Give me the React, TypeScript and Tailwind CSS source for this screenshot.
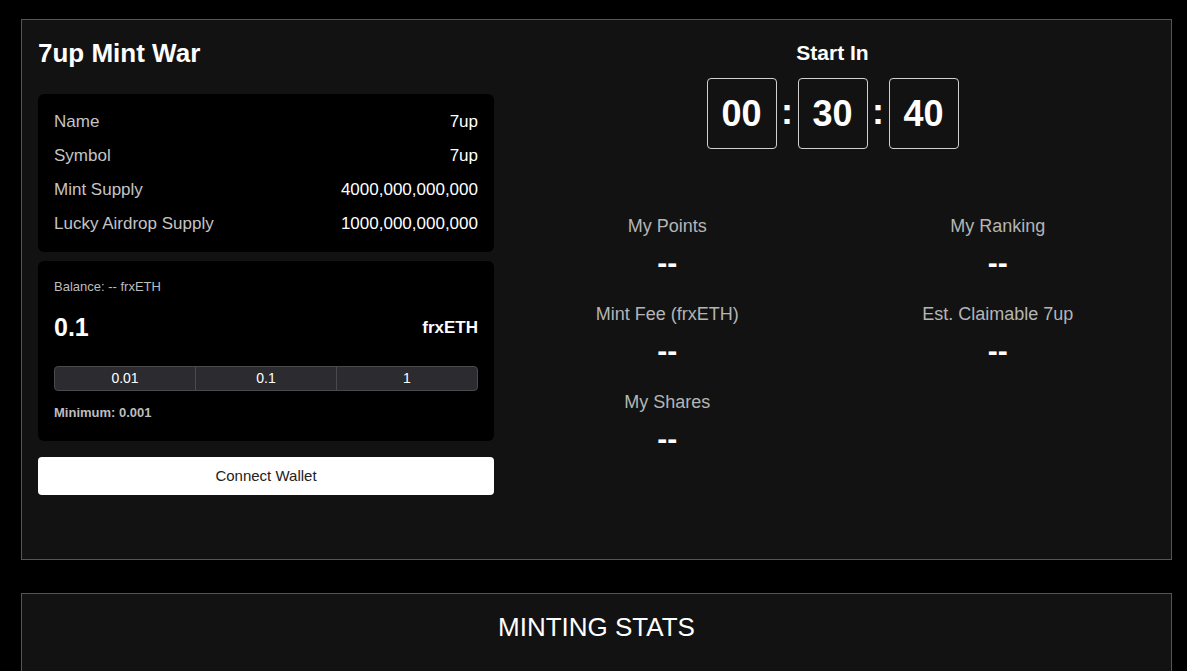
import React from 'react'

interface IInfoRow {
    label: string;
    value: string;
}

const infoRows: IInfoRow[] = [
    { label: 'Name', value: '7up' },
    { label: 'Symbol', value: '7up' },
    { label: 'Mint Supply', value: '4000,000,000,000' },
    { label: 'Lucky Airdrop Supply', value: '1000,000,000,000' },
]

const stats: string[] = [
    'My Points',
    'My Ranking',
    'Mint Fee (frxETH)',
    'Est. Claimable 7up',
    'My Shares',
]

const quickAmounts = ['0.01', '0.1', '1']

const TimeBox: React.FC<{ value: string }> = ({ value }) => (
    <div className='w-[70px] h-[71px] border border-[#d0d0d0] rounded-[4px] flex items-center justify-center text-[36px] font-bold text-white leading-none'>
        {value}
    </div>
)

const Colon = () => (
    <div className='w-[21px] text-center text-[36px] font-bold text-white leading-none pb-[4px]'>:</div>
)

const App: React.FC = () => {
    return (
        <div className='min-h-[671px] bg-black pt-[19px] pl-[21px] pr-[15px] font-["Liberation_Sans",Arial,sans-serif]'>
            <div className='bg-[#121212] border border-[#555] px-[16px] pt-[16px] pb-[64px] flex gap-[16px]'>
                {/* columna izquierda */}
                <div className='w-[456px] shrink-0'>
                    <h1 className='text-[26px] leading-[34px] font-bold text-white'>7up Mint War</h1>

                    <div className='mt-[24px] bg-black rounded-[6px] p-[16px] flex flex-col gap-[10px]'>
                        {infoRows.map((row) => (
                            <div key={row.label} className='flex justify-between text-[17px] leading-[24px]'>
                                <span className='text-[#c4c4c4]'>{row.label}</span>
                                <span className='text-white'>{row.value}</span>
                            </div>
                        ))}
                    </div>

                    <div className='mt-[9px] bg-black rounded-[6px] px-[16px] pt-[16px] pb-[20px]'>
                        <div className='text-[13px] leading-[20px] text-[#bdbdbd]'>Balance: -- frxETH</div>
                        <div className='mt-[15px] flex items-center justify-between h-[32px]'>
                            <span className='text-[25px] font-bold text-white'>0.1</span>
                            <span className='text-[17px] font-bold text-white'>frxETH</span>
                        </div>
                        <div className='mt-[22px] flex h-[25px] border border-[#4a4a4e] rounded-[4px] overflow-hidden bg-[#2c2c30]'>
                            {quickAmounts.map((amt, i) => (
                                <button
                                    key={amt}
                                    className={i > 0
                                        ? 'flex-1 text-[14px] text-white border-l border-[#4a4a4e]'
                                        : 'flex-1 text-[14px] text-white'}
                                >
                                    {amt}
                                </button>
                            ))}
                        </div>
                        <div className='mt-[14px] text-[13px] leading-[16px] font-bold text-[#bdbdbd]'>Minimum: 0.001</div>
                    </div>

                    <button className='mt-[16px] w-full h-[38px] bg-white rounded-[4px] text-[15px] text-[#222]'>
                        Connect Wallet
                    </button>
                </div>

                {/* columna derecha */}
                <div className='flex-1 flex flex-col items-center'>
                    <div className='text-[21px] leading-[28px] font-bold text-white mt-[3px]'>Start In</div>
                    <div className='mt-[11px] flex items-center'>
                        <TimeBox value='00' />
                        <Colon />
                        <TimeBox value='30' />
                        <Colon />
                        <TimeBox value='40' />
                    </div>

                    <div className='mt-[63px] w-full grid grid-cols-2 gap-x-[16px] gap-y-[19px]'>
                        {stats.map((label) => (
                            <div key={label} className='flex flex-col items-center'>
                                <div className='text-[18px] leading-[28px] text-[#b5b5b5]'>{label}</div>
                                <div className='mt-[5px] text-[30px] leading-[36px] font-bold text-white'>--</div>
                            </div>
                        ))}
                    </div>
                </div>
            </div>

            <div className='mt-[33px] bg-[#121212] border border-[#555] h-[120px] pt-[15px]'>
                <h2 className='text-center text-[26px] leading-[36px] text-white'>MINTING STATS</h2>
            </div>
        </div>
    )
}

export default App
